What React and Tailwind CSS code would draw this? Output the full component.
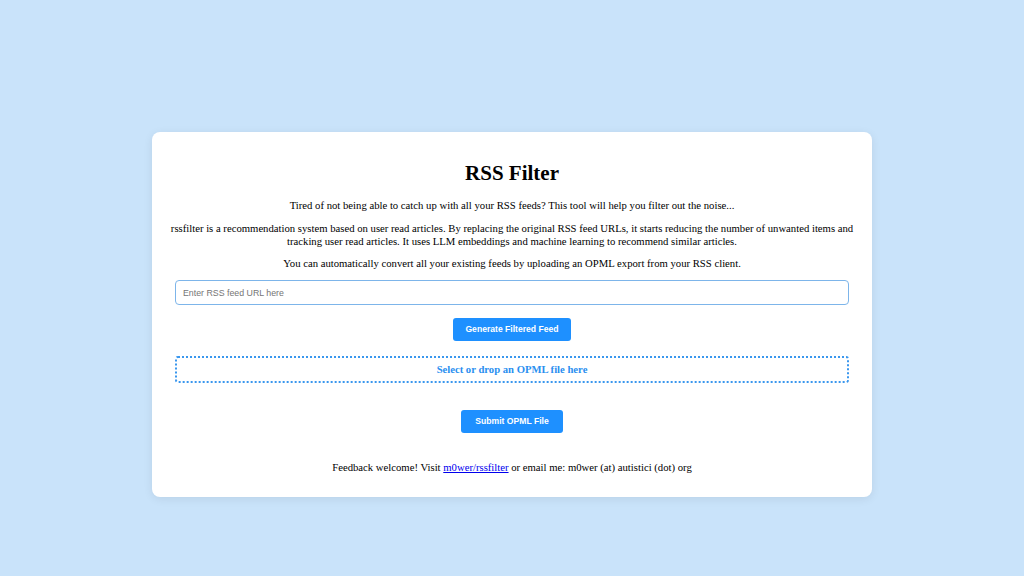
const serif = { fontFamily: '"Liberation Serif", "Times New Roman", serif' };

export default function App() {
  return (
    <div className="min-h-[576px] w-full bg-[#c9e3fa] pt-[132px] font-['Liberation_Serif',serif] text-black">
      <div className="mx-auto w-[720px] rounded-lg bg-white px-[16px] pt-[27px] pb-[23px] text-center shadow-[0_2px_10px_rgba(0,0,0,0.08)]">
        <h1 className="text-[21px] font-bold leading-[28px]">RSS Filter</h1>

        <p className="mt-[12px] text-[10.7px] leading-[13px]">
          Tired of not being able to catch up with all your RSS feeds? This tool will help you filter out the noise...
        </p>
        <p className="mt-[10px] text-[10.7px] leading-[13px]">
          rssfilter is a recommendation system based on user read articles. By replacing the original RSS feed URLs, it starts reducing the number of unwanted items and tracking user read articles. It uses LLM embeddings and machine learning to recommend similar articles.
        </p>
        <p className="mt-[9px] text-[10.7px] leading-[13px]">
          You can automatically convert all your existing feeds by uploading an OPML export from your RSS client.
        </p>

        <div className="px-[7px]">
          <input
            type="text"
            placeholder="Enter RSS feed URL here"
            className="mt-[10px] block h-[25px] w-full rounded-[4px] border border-[#7db5ea] px-[7px] font-['Liberation_Sans',Arial,sans-serif] text-[8.8px] placeholder:text-[#757575] focus:outline-none"
          />

          <button className="mt-[13px] h-[23px] w-[118px] rounded-[3px] bg-[#1e90ff] font-['Liberation_Sans',Arial,sans-serif] text-[8.6px] font-bold text-white">
            Generate Filtered Feed
          </button>

          <div className="mt-[15px] flex h-[27px] items-center justify-center rounded-[3px] border-2 border-dotted border-[#3a97ee]">
            <span className="text-[10.65px] font-bold text-[#2a8ff0]" style={serif}>Select or drop an OPML file here</span>
          </div>

          <button className="mt-[27px] h-[23px] w-[102px] rounded-[3px] bg-[#1e90ff] font-['Liberation_Sans',Arial,sans-serif] text-[8.6px] font-bold text-white">
            Submit OPML File
          </button>
        </div>

        <p className="mt-[27px] text-[10.7px] leading-[14px]">
          Feedback welcome! Visit{' '}
          <a href="#" className="text-[#0000ee] underline">m0wer/rssfilter</a>{' '}
          or email me: m0wer (at) autistici (dot) org
        </p>
      </div>
    </div>
  );
}
